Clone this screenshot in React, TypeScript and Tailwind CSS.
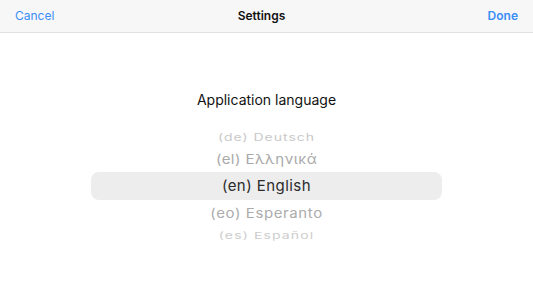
const languages = [
  { label: "(de) Deutsch", cls: "h-[22px] text-[14px] tracking-[0.07em] text-[#c9c9c9] scale-y-[0.72]" },
  { label: "(el) Ελληνικά", cls: "h-[22px] text-[15px] tracking-[0.03em] text-[#a9a9a9] scale-y-[0.9]" },
];

const after = [
  { label: "(eo) Esperanto", cls: "h-[22px] text-[15px] tracking-[0.04em] text-[#acacac] scale-y-[0.9]" },
  { label: "(es) Español", cls: "h-[22px] text-[14px] tracking-[0.08em] text-[#cdcdcd] scale-y-[0.68]" },
];

export default function App() {
  return (
    <div className="w-[533px] h-[300px] bg-white overflow-hidden" style={{ fontFamily: "Inter, 'Liberation Sans', sans-serif" }}>
      <div className="h-[33px] grid grid-cols-[1fr_auto_1fr] items-center px-[15px] bg-[#f7f7f7] border-b border-[#e2e2e2] text-[12px]">
        <span className="text-[#3a8ef6]">Cancel</span>
        <span className="mr-[10px] font-semibold text-[#111]">Settings</span>
        <span className="justify-self-end font-semibold text-[#3a8ef6]">Done</span>
      </div>

      <div className="pt-[57px] flex flex-col items-center">
        <div className="text-[14px] leading-[20px] text-[#111]">Application language</div>

        <div className="mt-[16px] w-[351px] flex flex-col">
          {languages.map((l) => (
            <div key={l.label} className={"flex items-center justify-center " + l.cls}>
              {l.label}
            </div>
          ))}
          <div className="mt-[2px] h-[28px] pt-[1px] rounded-[8px] bg-[#ededed] flex items-center justify-center text-[15px] tracking-[0.03em] text-[#2b2b2b]">
            (en) English
          </div>
          <div className="mt-[2px]" />
          {after.map((l) => (
            <div key={l.label} className={"flex items-center justify-center " + l.cls}>
              {l.label}
            </div>
          ))}
        </div>
      </div>
    </div>
  );
}
